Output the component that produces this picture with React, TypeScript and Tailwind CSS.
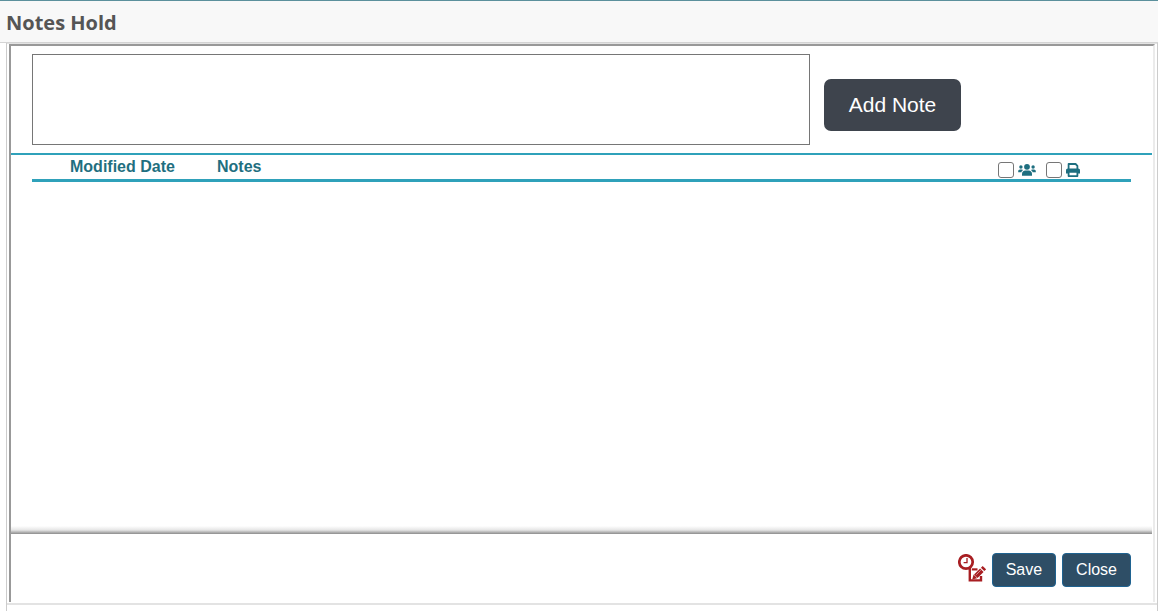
import { useState } from "react";

type Note = {
  id: number;
  modified: string;
  text: string;
};

function UsersIcon() {
  return (
    <svg viewBox="0 0 18 14" className="w-[18px] h-3.5 ml-1" fill="currentColor" aria-hidden="true">
      <circle cx="9" cy="3.8" r="2.9" />
      <circle cx="2.9" cy="4" r="1.7" />
      <circle cx="15.1" cy="4" r="1.7" />
      <path d="M4 12.8V11C4 8.9 5.5 7.6 7.4 7.6H10.6C12.5 7.6 14 8.9 14 11V12.8Z" />
      <path d="M0.2 9.2V8.3C0.2 7.2 1 6.5 2 6.5H3.6C4.2 6.5 4.7 6.7 5.1 7.1C4.2 7.6 3.6 8.3 3.3 9.2Z" />
      <path d="M17.8 9.2V8.3C17.8 7.2 17 6.5 16 6.5H14.4C13.8 6.5 13.3 6.7 12.9 7.1C13.8 7.6 14.4 8.3 14.7 9.2Z" />
    </svg>
  );
}

function PrintIcon() {
  return (
    <svg viewBox="0 0 14 14" className="size-3.5 ml-1" aria-hidden="true">
      <path d="M2.6 7V1H9.6L11.4 2.8V7" fill="none" stroke="currentColor" strokeWidth="1.8" strokeLinejoin="round" />
      <path d="M1.8 5.4H12.2C13.2 5.4 14 6.2 14 7.2V10.4H0V7.2C0 6.2 0.8 5.4 1.8 5.4Z" fill="currentColor" />
      <path d="M2.6 8.8H11.4V13.1H2.6Z" fill="#fff" stroke="currentColor" strokeWidth="1.8" strokeLinejoin="round" />
    </svg>
  );
}

function NoteHistoryIcon() {
  return (
    <svg viewBox="0 0 28 28" className="size-7" fill="none" stroke="#a81e22" aria-hidden="true">
      <circle cx="8" cy="8" r="6.7" strokeWidth="2.7" />
      <path d="M9 4V8.6H5.6" strokeWidth="1.3" />
      <path d="M11.8 14V26.4H23V22" strokeWidth="2.4" />
      <path d="M13.8 15.4H19.5" strokeWidth="2.2" />
      <path d="M17.8 22.2L23.8 16.2" strokeWidth="5" />
      <path d="M24.6 15.4L26.4 13.6" strokeWidth="4.8" />
      <path d="M15.6 20.4L14.2 25.4L19.2 24.2Z" fill="#a81e22" stroke="none" />
      <path d="M18.2 20.8L22.8 16.2" stroke="#e0a4a6" strokeWidth="0.8" />
    </svg>
  );
}

export default function App() {
  const [draft, setDraft] = useState("");
  const [notes, setNotes] = useState<Note[]>([]);

  const addNote = () => {
    if (!draft.trim()) return;
    setNotes([...notes, { id: Date.now(), modified: new Date().toLocaleDateString(), text: draft }]);
    setDraft("");
  };

  return (
    <div className="h-screen flex flex-col bg-white font-['Liberation_Sans',Arial,sans-serif]">
      <header className="h-[43px] shrink-0 px-1.5 pt-0.5 flex items-center bg-[#f8f8f8] border-t border-t-[#5b909c] border-b border-b-[#d4d4d4]">
        <h1 className="text-xl font-bold text-[#555] font-['Open_Sans',sans-serif]">Notes Hold</h1>
      </header>

      <div className="flex-1 min-h-0 ml-1.5 pb-1.5 flex border-x border-[#ccc]">
        <div className="flex-1 min-w-0 flex flex-col border-t border-b-2 border-[#e3e3e3] pl-0.5 pr-0.5 pb-px">
          <main className="flex-1 min-h-0 flex flex-col border-l-2 border-t-2 border-r-2 border-l-[#999] border-t-[#999] border-r-[#ebebeb] pr-px">
            {/* New note */}
            <section className="px-[21px] py-2 flex items-center gap-3.5 border-b-2 border-[#2fa1ba]">
              <textarea
                aria-label="Note"
                className="block flex-1 min-w-0 h-[91px] p-1 border border-[#767676] resize-none"
                value={draft}
                onChange={(e) => setDraft(e.target.value)}
              />
              <div className="w-[307px] pt-2.5">
                <button
                  type="button"
                  className="block w-[137px] h-[52px] rounded-[7px] bg-[#3e444d] text-white text-[21px] cursor-pointer"
                  onClick={addNote}
                >
                  Add Note
                </button>
              </div>
            </section>

            {/* Notes list */}
            <section className="flex-1 min-h-0 overflow-auto px-[21px]">
              <table className="w-full table-fixed text-left text-[#1f6f80]">
                <thead>
                  <tr className="h-[25px] border-b-3 border-[#2fa1ba]">
                    <th className="w-[185px] pl-[38px] leading-5">Modified Date</th>
                    <th className="leading-5">Notes</th>
                    <th className="w-[133px]">
                      <div className="flex items-center pt-1.5">
                        <input
                          type="checkbox"
                          aria-label="Share all notes"
                          className="appearance-none size-4 border border-[#767676] rounded-[3px] checked:bg-[#2fa1ba]"
                        />
                        <UsersIcon />
                        <input
                          type="checkbox"
                          aria-label="Print all notes"
                          className="appearance-none size-4 ml-2.5 border border-[#767676] rounded-[3px] checked:bg-[#2fa1ba]"
                        />
                        <PrintIcon />
                      </div>
                    </th>
                  </tr>
                </thead>
                <tbody className="text-sm text-gray-700">
                  {notes.map((note) => (
                    <tr key={note.id}>
                      <td className="pl-[38px] py-1">{note.modified}</td>
                      <td className="py-1">{note.text}</td>
                      <td />
                    </tr>
                  ))}
                </tbody>
              </table>
            </section>

            {/* Actions */}
            <div className="h-2 shrink-0 bg-linear-to-b from-white via-[#e6e6e6] to-[#8c8c8c]" />
            <footer className="h-[68px] shrink-0 px-[21px] pt-[19px] flex items-start justify-end gap-1.5">
              <button type="button" aria-label="Note history" className="pt-px cursor-pointer">
                <NoteHistoryIcon />
              </button>
              <button type="button" className="h-[34px] px-[13px] rounded-sm border border-[#1f6391] bg-[#2e4e66] text-white text-base cursor-pointer">
                Save
              </button>
              <button type="button" className="h-[34px] px-[13px] rounded-sm border border-[#1f6391] bg-[#2e4e66] text-white text-base cursor-pointer">
                Close
              </button>
            </footer>
          </main>
        </div>
      </div>
    </div>
  );
}
